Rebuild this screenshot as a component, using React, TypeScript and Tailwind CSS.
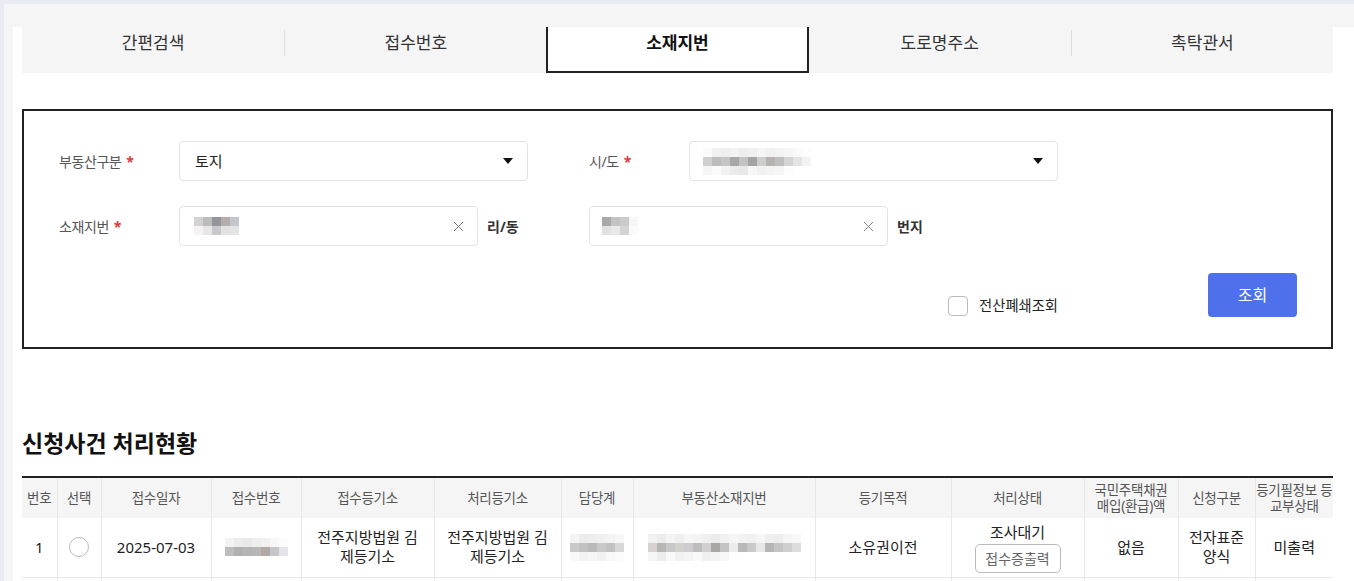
import { X } from 'lucide-react'
import clsx from 'clsx'

const TABS = ['간편검색', '접수번호', '소재지번', '도로명주소', '촉탁관서']
const ACTIVE_TAB = 2

// blurred (mosaic) placeholders for masked personal data
const SIDO_MOSAIC = [
  ['#fbfbfb', '#f1f1f1', '#eeeeee', '#f3f3f3', '#eeeeee', '#f0f0f0', '#f5f5f5', '#f0f0f0', '#f3f3f3', '#f6f6f6', '#fafafa', '#fdfdfd'],
  ['#cfcfcf', '#bdbdbd', '#c4c4c4', '#a9a6a6', '#c3c3c3', '#a4a4a6', '#cdcdcd', '#b8b2b0', '#bfbfbf', '#d4d4d4', '#e4e4e4', '#f3f3f3'],
  ['#f6f6f6', '#fbfbfb', '#f2f2f2', '#ececec', '#e8e8e8', '#f7f7f7', '#f1f1f1', '#f4f4f4', '#f6f6f6', '#fdfdfd', '#ffffff', '#ffffff'],
]
const DONG_MOSAIC = [
  ['#d2d2d2', '#bcbcbc', '#94949b', '#b3aeab', '#c3c6cd'],
  ['#f5f3f1', '#e6e6e6', '#c9c8cf', '#e2e2e2', '#e4e4e6'],
]
const BUNJI_MOSAIC = [
  ['#a9a9a9', '#c3c3c3', '#cacaca', '#f6f6f6'],
  ['#e1e1e1', '#e9e9e9', '#d4d4d4', '#fbfbfb'],
]
const RECEIPT_MOSAIC = [
  ['#f3f3f3', '#ececec', '#e9e9e9', '#eeeeee', '#f1f1f1', '#f7f7f7', '#fdfdfd'],
  ['#bdbdbd', '#b0b0b0', '#b5b5b5', '#b8b8b8', '#b2aaa5', '#c6c6c8', '#e3e5ea'],
]
const TEAM_MOSAIC = [
  ['#f4f4f4', '#ececec', '#eeeeee', '#f1f1f1', '#f3f3f3', '#f7f7f7'],
  ['#c9c9c9', '#c1c1c1', '#bbb8b8', '#c9c9c9', '#c2c2c2', '#d8d8d8'],
  ['#f9f9f9', '#f3f3f3', '#f6f6f6', '#f1f1f1', '#f8f8f8', '#fcfcfc'],
]
const ADDR_MOSAIC = [
  ['#f2f2f2', '#ececec', '#f4f4f4', '#efefef', '#f6f6f6', '#f3f3f3', '#f0f0f0', '#ebebeb', '#f1f1f1', '#f5f5f5', '#f2f2f2', '#f0f0f0', '#f6f6f6', '#efefef', '#ededed', '#f4f4f4', '#f8f8f8'],
  ['#d7d2cf', '#b8b5b5', '#c7c7c7', '#d2d2cc', '#cfcbd1', '#bfbcc0', '#d0d0d0', '#a9a6a6', '#c3c3c3', '#ebebeb', '#b9b9b9', '#c9c9c9', '#e6e6e6', '#b5b5b5', '#c4c4c4', '#cfcfcf', '#dcdcdc'],
  ['#f6f6f6', '#ececec', '#f9f9f9', '#f1f1f1', '#f5f5f5', '#fafafa', '#f0f0f0', '#f3f3f3', '#f8f8f8', '#fefefe', '#ffffff', '#ffffff', '#ffffff', '#ffffff', '#ffffff', '#ffffff', '#ffffff'],
]

const COLS = [35, 44, 110, 90, 133, 127, 72, 182, 136, 133, 94, 77, 78]
const HEADERS: string[][] = [
  ['번호'], ['선택'], ['접수일자'], ['접수번호'], ['접수등기소'], ['처리등기소'], ['담당계'],
  ['부동산소재지번'], ['등기목적'], ['처리상태'], ['국민주택채권', '매입(환급)액'], ['신청구분'], ['등기필정보 등', '교부상태'],
]

export default function App() {
  return (
    <div className="min-h-screen bg-[#e9ebf3] pt-[4px] pl-[4px] font-['Noto_Sans','Noto_Sans_CJK_KR',sans-serif] text-[#222]">
      <div className="bg-[#f5f5f5] pt-[23px] pl-[9px]">
        <div className="bg-white pl-[9px] pr-[21px] pb-[40px]">
          <Tabs />
          <SearchBox />

          <h2 className="mt-[78px] text-[23px] leading-[32px] font-bold text-[#111]">신청사건 처리현황</h2>

          <ResultTable />
        </div>
      </div>
    </div>
  )
}

function Tabs() {
  return (
    <div className="grid grid-cols-5 w-full h-[46px] bg-[#f5f5f5]">
      {TABS.map((t, i) => {
        const active = i === ACTIVE_TAB
        const divider = i > 0 && !active && i - 1 !== ACTIVE_TAB
        return (
          <div
            key={t}
            className={clsx('pt-[3px]', active && 'bg-white border-2 border-t-0 border-[#222]')}
          >
            <div
              className={clsx(
                'h-[26px] leading-[26px] text-center text-[17px]',
                divider && 'border-l border-[#dddddd]',
                active ? 'font-bold text-[#111]' : 'text-[#333]',
              )}
            >
              {t}
            </div>
          </div>
        )
      })}
    </div>
  )
}

function SearchBox() {
  return (
    <div className="mt-[36px] h-[240px] border-2 border-[#222] pt-[30px] pl-[35px] pr-[34px]">
      <div className="flex items-center h-[40px]">
        <Label text="부동산구분" className="w-[120px]" />
        <div className="w-[349px] h-[40px] border border-[#e3e3e3] rounded-[4px] flex items-center justify-between pl-[15px] pr-[14px]">
          <span className="text-[15px] text-[#222]">토지</span>
          <Caret />
        </div>
        <Label text="시/도" className="ml-[61px] w-[100px]" />
        <div className="w-[369px] h-[40px] border border-[#e3e3e3] rounded-[4px] flex items-center justify-between pl-[13px] pr-[14px]">
          <Mosaic rows={SIDO_MOSAIC} />
          <Caret />
        </div>
      </div>

      <div className="flex items-center h-[40px] mt-[25px]">
        <Label text="소재지번" className="w-[120px]" />
        <div className="w-[299px] h-[40px] border border-[#e3e3e3] rounded-[4px] flex items-center justify-between pl-[14px] pr-[10px]">
          <Mosaic rows={DONG_MOSAIC} />
          <X size={17} strokeWidth={1.3} className="text-[#777]" />
        </div>
        <span className="w-[111px] pl-[9px] text-[14px] font-bold text-[#333]">리/동</span>
        <div className="w-[299px] h-[40px] border border-[#e3e3e3] rounded-[4px] flex items-center justify-between pl-[12px] pr-[10px]">
          <Mosaic rows={BUNJI_MOSAIC} />
          <X size={17} strokeWidth={1.3} className="text-[#777]" />
        </div>
        <span className="pl-[9px] text-[14px] font-bold text-[#333]">번지</span>
      </div>

      <div className="flex justify-end mt-[27px]">
        <label className="flex items-center gap-[11px] mt-[22px] h-[22px]">
          <span className="w-[20px] h-[20px] border border-[#bbbbbb] rounded-[4px] bg-white" />
          <span className="text-[14.3px] text-[#222]">전산폐쇄조회</span>
        </label>
        <button className="ml-[150px] w-[89px] h-[44px] bg-[#4e70ea] rounded-[4px] text-white text-[16px]">
          조회
        </button>
      </div>
    </div>
  )
}

function Label({ text, className }: { text: string; className?: string }) {
  return (
    <span className={clsx('text-[14px] tracking-[-0.03em] text-[#555]', className)}>
      {text}
      <span className="ml-[5px] text-[#e03a3e] font-bold">*</span>
    </span>
  )
}

function Caret() {
  return (
    <svg width="10" height="6" viewBox="0 0 10 6">
      <polygon points="0,0 10,0 5,6" fill="#111" />
    </svg>
  )
}

function Mosaic({ rows }: { rows: string[][] }) {
  return (
    <div className="flex flex-col">
      {rows.map((r, i) => (
        <div key={i} className="flex">
          {r.map((c, j) => (
            <span key={j} className="w-[9px] h-[9px]" style={{ backgroundColor: c }} />
          ))}
        </div>
      ))}
    </div>
  )
}

function ResultTable() {
  const td = 'border-l border-b border-[#e8e8e8] first:border-l-0 text-center align-middle text-[15px] leading-[19px] text-[#222]'
  return (
    <div className="mt-[17px] border-t-2 border-[#222]">
      <table className="w-full table-fixed border-collapse">
        <colgroup>
          {COLS.map((w, i) => (
            <col key={i} style={{ width: w }} />
          ))}
        </colgroup>
        <thead>
          <tr className="bg-[#f5f5f5]">
            {HEADERS.map((h, i) => (
              <th
                key={i}
                className="h-[40px] p-0 border-l border-[#e8e8e8] first:border-l-0 font-normal text-[13.5px] leading-[16px] tracking-[-0.02em] text-[#555] whitespace-nowrap"
              >
                {h.map((line, k) => (
                  <div key={k}>{line}</div>
                ))}
              </th>
            ))}
          </tr>
        </thead>
        <tbody>
          <tr className="h-[59px]">
            <td className={td}>1</td>
            <td className={td}>
              <span className="block mx-auto w-[20px] h-[20px] rounded-full border border-[#bbbbbb]" />
            </td>
            <td className={td}>2025-07-03</td>
            <td className={td}>
              <div className="flex justify-center"><Mosaic rows={RECEIPT_MOSAIC} /></div>
            </td>
            <td className={td}>전주지방법원 김<br />제등기소</td>
            <td className={td}>전주지방법원 김<br />제등기소</td>
            <td className={td}>
              <div className="flex justify-center"><Mosaic rows={TEAM_MOSAIC} /></div>
            </td>
            <td className={td}>
              <div className="flex justify-center"><Mosaic rows={ADDR_MOSAIC} /></div>
            </td>
            <td className={td}>소유권이전</td>
            <td className={td}>
              <div className="flex flex-col items-center pt-[2px]">
                <span>조사대기</span>
                <button className="mt-[2px] w-[86px] h-[29px] border border-[#bbbbbb] rounded-[5px] text-[14px] text-[#666]">
                  접수증출력
                </button>
              </div>
            </td>
            <td className={td}>없음</td>
            <td className={td}>전자표준<br />양식</td>
            <td className={td}>미출력</td>
          </tr>
          <tr className="h-[59px]">
            <td className={td}>2</td>
            <td className={td}>
              <span className="block mx-auto w-[20px] h-[20px] rounded-full border border-[#bbbbbb]" />
            </td>
            <td className={td}>2025-07-03</td>
            <td className={td}>
              <div className="flex justify-center"><Mosaic rows={RECEIPT_MOSAIC} /></div>
            </td>
            <td className={td}>전주지방법원 김<br />제등기소</td>
            <td className={td}>전주지방법원 김<br />제등기소</td>
            <td className={td}>
              <div className="flex justify-center"><Mosaic rows={TEAM_MOSAIC} /></div>
            </td>
            <td className={td}>
              <div className="flex justify-center"><Mosaic rows={ADDR_MOSAIC} /></div>
            </td>
            <td className={td}>소유권이전</td>
            <td className={td}>조사대기</td>
            <td className={td}>없음</td>
            <td className={td}>전자표준<br />양식</td>
            <td className={td}>미출력</td>
          </tr>
        </tbody>
      </table>
    </div>
  )
}
